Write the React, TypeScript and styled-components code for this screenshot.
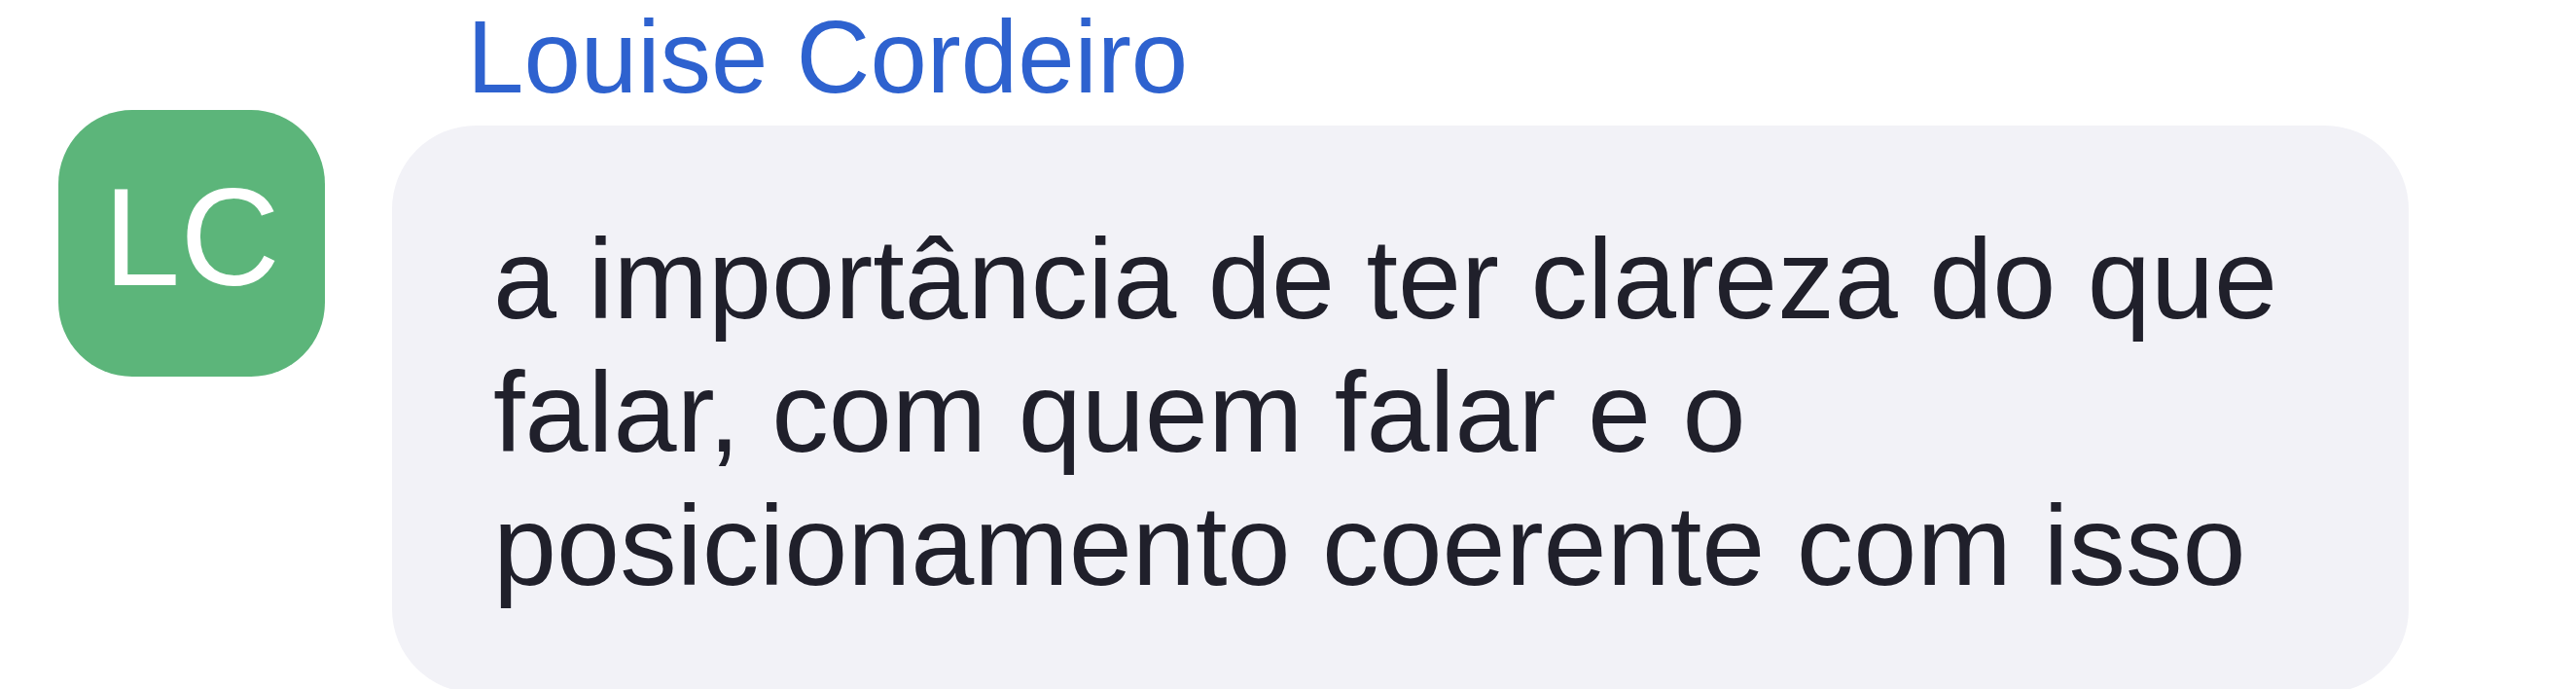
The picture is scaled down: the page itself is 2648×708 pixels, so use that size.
import styled, { createGlobalStyle } from "styled-components"

const GlobalStyle = createGlobalStyle`
	html, body {
		margin: 0;
		padding: 0;
		background: #FFFFFF;
		font-family: "Liberation Sans", Arial, sans-serif;
	}
`

const message = {
	author: "Louise Cordeiro",
	initials: "LC",
	text: "a importância de ter clareza do que falar, com quem falar e o posicionamento coerente com isso",
}

export default function App() {
	return (
		<>
			<GlobalStyle />
			<Thread>
				<MessageRow>
					<Avatar>{message.initials}</Avatar>
					<MessageBody>
						<AuthorName>{message.author}</AuthorName>
						<Bubble>{message.text}</Bubble>
					</MessageBody>
				</MessageRow>
			</Thread>
		</>
	)
}

const Thread = styled.div`
	width: 2648px;
	height: 708px;
	overflow: hidden;
	box-sizing: border-box;
	padding-left: 60px;
`
const MessageRow = styled.div`
	display: flex;
	align-items: flex-start;
	gap: 69px;
`
const Avatar = styled.div`
	flex: none;
	margin-top: 113px;
	width: 274px;
	height: 274px;
	border-radius: 76px;
	background: #5CB57A;
	color: #FFFFFF;
	display: flex;
	align-items: center;
	justify-content: center;
	box-sizing: border-box;
	padding-bottom: 12px;
	font-size: 142px;
	line-height: 1;
`
const MessageBody = styled.div`
	display: flex;
	flex-direction: column;
	padding-top: 6px;
`
const AuthorName = styled.div`
	margin-left: 77px;
	font-size: 105px;
	line-height: 105px;
	color: #2E62CF;
	white-space: nowrap;
`
const Bubble = styled.div`
	margin-top: 18px;
	width: 2073px;
	box-sizing: border-box;
	padding: 89px 104px 83px 104px;
	border-radius: 86px;
	background: #F2F2F7;
	color: #20202B;
	font-size: 117px;
	line-height: 137px;
`
